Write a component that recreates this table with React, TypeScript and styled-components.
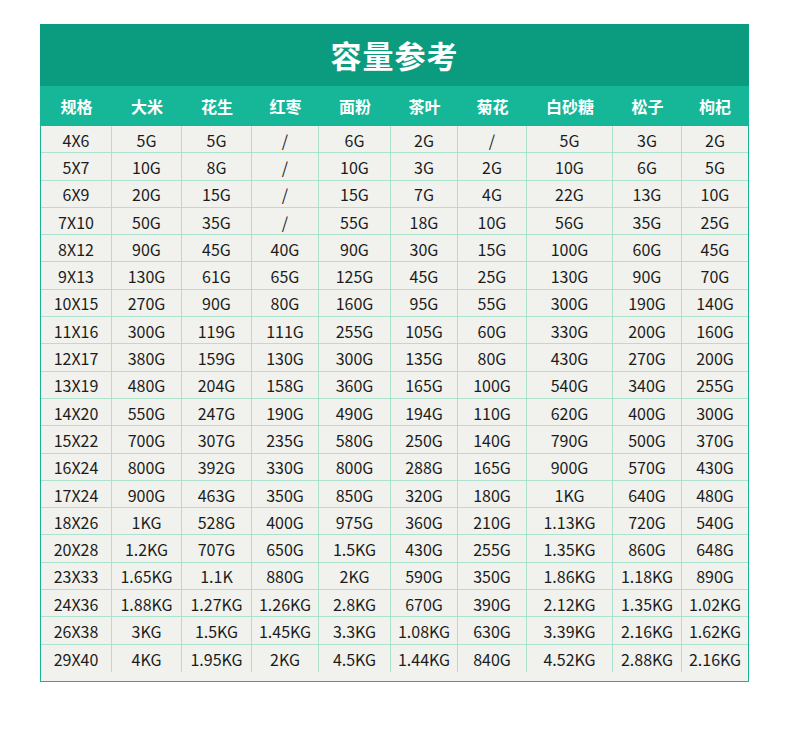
import React from "react";
import styled, { createGlobalStyle } from "styled-components";

const GlobalStyle = createGlobalStyle`
  html, body {
    margin: 0;
    padding: 0;
    background: #ffffff;
  }
  body {
    font-family: "Noto Sans CJK SC", "Noto Sans", sans-serif;
  }
`;

const COLUMNS = [71, 70, 70, 67, 72, 67, 69, 86, 69, 66];

const HEADERS = ["规格", "大米", "花生", "红枣", "面粉", "茶叶", "菊花", "白砂糖", "松子", "枸杞"];

const ROWS: string[][] = [
  ["4X6", "5G", "5G", "/", "6G", "2G", "/", "5G", "3G", "2G"],
  ["5X7", "10G", "8G", "/", "10G", "3G", "2G", "10G", "6G", "5G"],
  ["6X9", "20G", "15G", "/", "15G", "7G", "4G", "22G", "13G", "10G"],
  ["7X10", "50G", "35G", "/", "55G", "18G", "10G", "56G", "35G", "25G"],
  ["8X12", "90G", "45G", "40G", "90G", "30G", "15G", "100G", "60G", "45G"],
  ["9X13", "130G", "61G", "65G", "125G", "45G", "25G", "130G", "90G", "70G"],
  ["10X15", "270G", "90G", "80G", "160G", "95G", "55G", "300G", "190G", "140G"],
  ["11X16", "300G", "119G", "111G", "255G", "105G", "60G", "330G", "200G", "160G"],
  ["12X17", "380G", "159G", "130G", "300G", "135G", "80G", "430G", "270G", "200G"],
  ["13X19", "480G", "204G", "158G", "360G", "165G", "100G", "540G", "340G", "255G"],
  ["14X20", "550G", "247G", "190G", "490G", "194G", "110G", "620G", "400G", "300G"],
  ["15X22", "700G", "307G", "235G", "580G", "250G", "140G", "790G", "500G", "370G"],
  ["16X24", "800G", "392G", "330G", "800G", "288G", "165G", "900G", "570G", "430G"],
  ["17X24", "900G", "463G", "350G", "850G", "320G", "180G", "1KG", "640G", "480G"],
  ["18X26", "1KG", "528G", "400G", "975G", "360G", "210G", "1.13KG", "720G", "540G"],
  ["20X28", "1.2KG", "707G", "650G", "1.5KG", "430G", "255G", "1.35KG", "860G", "648G"],
  ["23X33", "1.65KG", "1.1K", "880G", "2KG", "590G", "350G", "1.86KG", "1.18KG", "890G"],
  ["24X36", "1.88KG", "1.27KG", "1.26KG", "2.8KG", "670G", "390G", "2.12KG", "1.35KG", "1.02KG"],
  ["26X38", "3KG", "1.5KG", "1.45KG", "3.3KG", "1.08KG", "630G", "3.39KG", "2.16KG", "1.62KG"],
  ["29X40", "4KG", "1.95KG", "2KG", "4.5KG", "1.44KG", "840G", "4.52KG", "2.88KG", "2.16KG"],
];

const gridColumns = COLUMNS.map((w) => `${w}px`).join(" ");

const Page = styled.div`
  padding: 24px 0 0 40px;
  width: 790px;
  box-sizing: border-box;
`;

const Card = styled.div`
  width: 709px;
  background: #f1f2ee;
  border: 1px solid #19b293;
  border-top: none;
  box-sizing: border-box;
`;

const Title = styled.div`
  height: 62px;
  margin: 0 -1px;
  background: #0b9c7f;
  color: #ffffff;
  font-size: 31px;
  font-weight: 700;
  letter-spacing: 1px;
  display: flex;
  align-items: center;
  justify-content: center;
  padding-bottom: 2px;
  box-sizing: border-box;
`;

const HeaderRow = styled.div`
  display: grid;
  grid-template-columns: ${gridColumns};
  height: 40px;
  margin: 0 -1px;
  padding: 0 1px;
  background: #15b798;
`;

const HeaderCell = styled.div`
  display: flex;
  align-items: center;
  justify-content: center;
  color: #ffffff;
  font-size: 16px;
  font-weight: 700;
`;

const Body = styled.div`
  display: grid;
  grid-template-columns: ${gridColumns};
  grid-auto-rows: 27.3px;
  padding-bottom: 9px;
`;

const Cell = styled.div<{ $lastCol: boolean; $lastRow: boolean }>`
  display: flex;
  align-items: center;
  justify-content: center;
  color: #1c1c1c;
  font-size: 16px;
  white-space: nowrap;
  border-right: ${(p) => (p.$lastCol ? "none" : "1px solid #ade2cf")};
  border-bottom: ${(p) => (p.$lastRow ? "none" : "1px solid #ade2cf")};
  box-sizing: border-box;
  padding-top: 1px;
`;

export default function App() {
  return (
    <>
      <GlobalStyle />
      <Page>
        <Card>
          <Title>容量参考</Title>
          <HeaderRow>
            {HEADERS.map((h) => (
              <HeaderCell key={h}>{h}</HeaderCell>
            ))}
          </HeaderRow>
          <Body>
            {ROWS.map((row, r) =>
              row.map((value, c) => (
                <Cell
                  key={`${r}-${c}`}
                  $lastCol={c === row.length - 1}
                  $lastRow={r === ROWS.length - 1}
                >
                  {value}
                </Cell>
              ))
            )}
          </Body>
        </Card>
      </Page>
    </>
  );
}
